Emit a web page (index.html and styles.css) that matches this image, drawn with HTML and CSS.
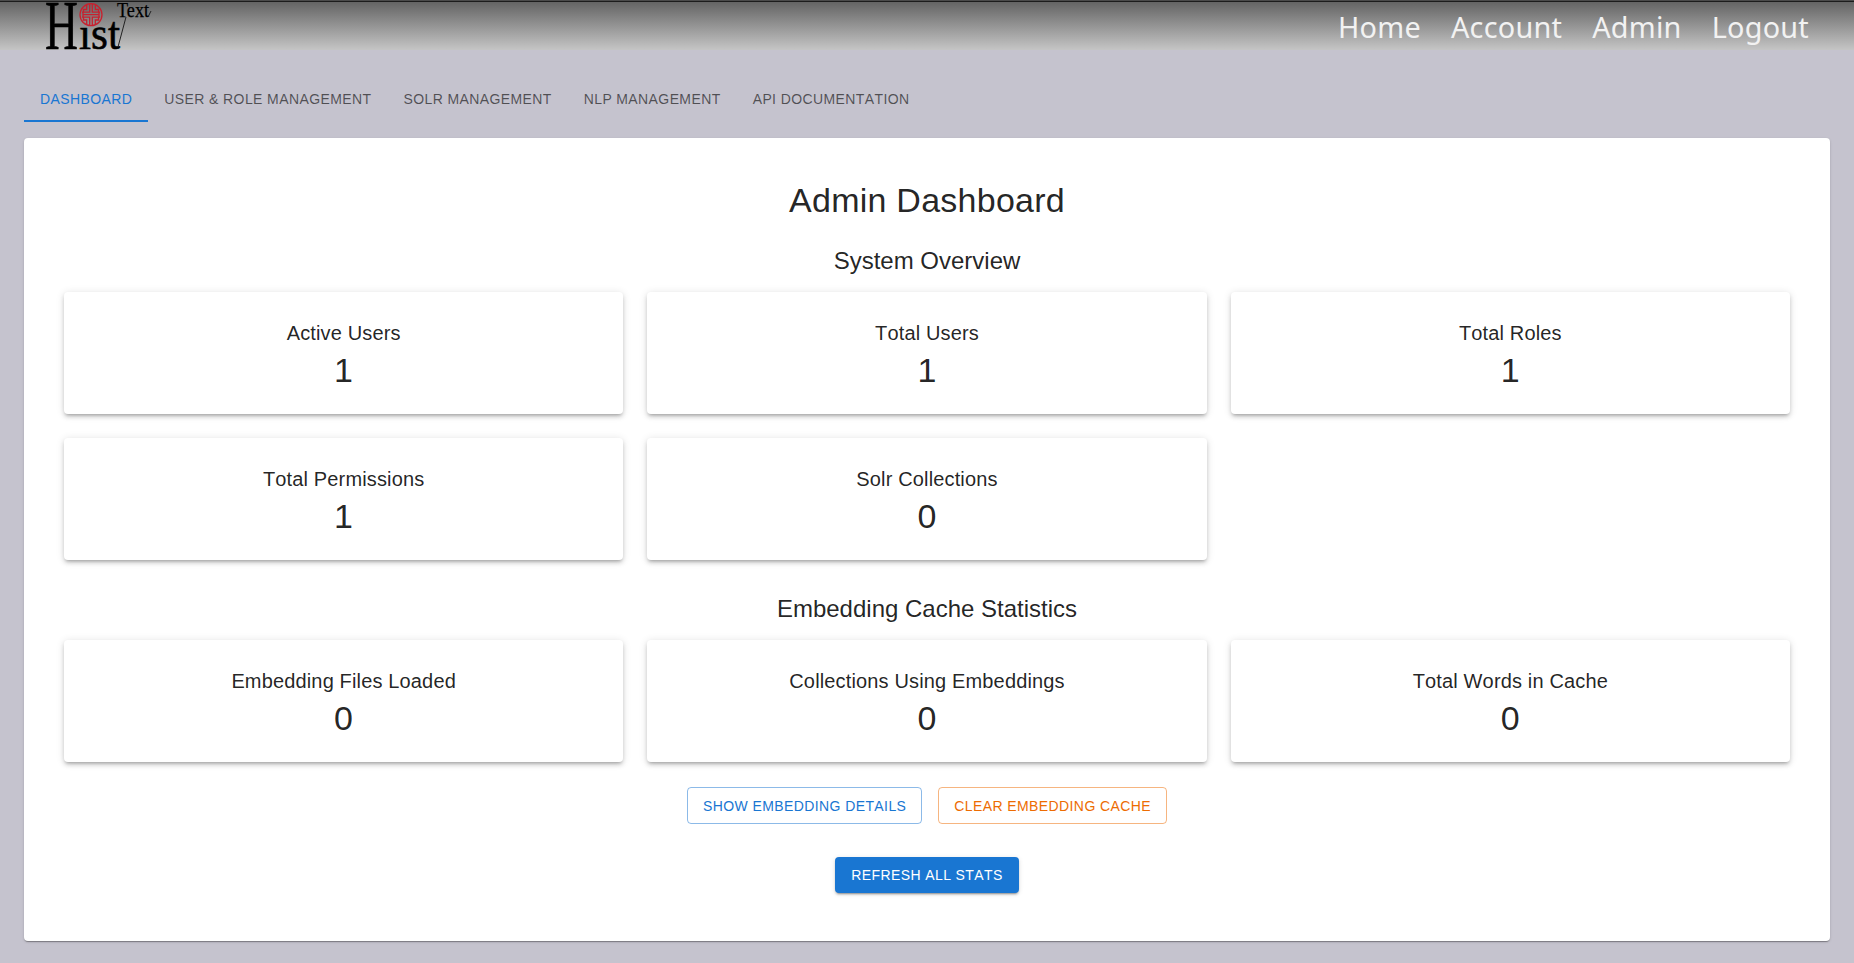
FILE: index.html
```html
<!DOCTYPE html>
<html lang="en">
<head>
<meta charset="utf-8">
<title>HistText Admin</title>
<link rel="stylesheet" href="styles.css">
</head>
<body>
<header class="topbar">
  <svg class="logo" width="112" height="50" viewBox="0 0 112 50" role="img" aria-label="HistText">
    <g class="logo-text">
      <text x="0" y="48.500" font-size="69" textLength="33" lengthAdjust="spacingAndGlyphs">H</text>
      <text x="34" y="48.500" font-size="47" textLength="41" lengthAdjust="spacingAndGlyphs">ıst</text>
      <text class="logo-small" x="72" y="17" font-size="20.500" textLength="32" lengthAdjust="spacingAndGlyphs">Text</text>
    </g>
    <path class="logo-slash" d="M81 17 L73 47 M106 11 L103.500 16"/>
    <g class="logo-seal">
      <circle cx="46" cy="14.700" r="11"/>
      <path d="M38 14.700H54M38 12.200V17.200M54 12.200V17.200M44.700 4V12.200H37M47.300 4V12.200H55M44.700 25.500V17.200H37M47.300 25.500V17.200H55M41.700 5V9.500H38.500V12M50.300 5V9.500H53.500V12M41.700 24.500V20H38.500V17.500M50.300 24.500V20H53.500V17.500"/>
    </g>
  </svg>
  <nav class="nav">
    <a>Home</a><a>Account</a><a>Admin</a><a>Logout</a>
  </nav>
</header>
<main class="page">
  <div class="tabs">
    <a class="tab tab-active">Dashboard</a>
    <a class="tab">User &amp; Role Management</a>
    <a class="tab">Solr Management</a>
    <a class="tab">NLP Management</a>
    <a class="tab">API Documentation</a>
  </div>
  <section class="panel">
    <h1 class="title">Admin Dashboard</h1>
    <h2 class="subtitle">System Overview</h2>
    <div class="grid">
      <div class="card"><h3>Active Users</h3><p>1</p></div>
      <div class="card"><h3>Total Users</h3><p>1</p></div>
      <div class="card"><h3>Total Roles</h3><p>1</p></div>
      <div class="card"><h3>Total Permissions</h3><p>1</p></div>
      <div class="card"><h3>Solr Collections</h3><p>0</p></div>
    </div>
    <h2 class="subtitle subtitle-next">Embedding Cache Statistics</h2>
    <div class="grid">
      <div class="card"><h3>Embedding Files Loaded</h3><p>0</p></div>
      <div class="card"><h3>Collections Using Embeddings</h3><p>0</p></div>
      <div class="card"><h3>Total Words in Cache</h3><p>0</p></div>
    </div>
    <div class="actions">
      <button class="btn btn-outline">Show Embedding Details</button>
      <button class="btn btn-outline btn-warn">Clear Embedding Cache</button>
    </div>
    <div class="refresh"><button class="btn btn-solid">Refresh All Stats</button></div>
  </section>
</main>
</body>
</html>
```
FILE: styles.css
```css
* { box-sizing: border-box; }
body {
  margin: 0;
  min-height: 100vh;
  background: #c5c3ce;
  color: rgba(0, 0, 0, 0.87);
  font-family: "Liberation Sans", Arial, sans-serif;
}
h1, h2, h3, p { margin: 0; font-weight: 400; }
.topbar {
  display: flex;
  justify-content: space-between;
  height: 50px;
  padding: 0 45px;
  border-top: 1px solid #4a4a4a;
  background: linear-gradient(#1c1c1c 0 1px, #646464 1px, #c5c5c5);
}
.logo { display: block; margin-top: -1px; overflow: visible; }
.logo-text { font-family: "Liberation Serif", serif; fill: #000; stroke: #000; stroke-width: 0.6; }
.logo-small { stroke-width: 0.25; }
.logo-slash { stroke: #222; stroke-width: 1; fill: none; }
.logo-seal { stroke: #c8202e; stroke-width: 1.3; fill: none; }
.nav {
  display: flex;
  gap: 30px;
  font: 28.8px/52px "Noto Sans", sans-serif;
  letter-spacing: 0.25px;
  color: #f2f2f2;
}
.page { padding: 24px 24px 22px; }
.tabs { display: flex; height: 48px; margin-bottom: 16px; }
.tab {
  display: flex;
  align-items: center;
  padding: 5px 16px 0;
  border-bottom: 2px solid transparent;
  font-size: 14px;
  line-height: 1.25;
  letter-spacing: 0.02857em;
  text-transform: uppercase;
  color: rgba(0, 0, 0, 0.6);
}
.tab:last-child { font-kerning: none; }
.tab-active { color: #1976d2; border-color: #1976d2; }
.panel {
  height: 803px;
  padding: 41px 40px 39px;
  border-radius: 4px;
  background: #fff;
  text-align: center;
  box-shadow: 0 2px 1px -1px rgba(0,0,0,.2), 0 1px 1px rgba(0,0,0,.14), 0 1px 3px rgba(0,0,0,.12);
}
.title { margin-bottom: 24px; font-size: 34px; line-height: 42px; letter-spacing: 0.00735em; }
.subtitle { margin-bottom: 15px; font-size: 24px; line-height: 32px; }
.subtitle-next { margin-top: 33px; }
.grid { display: grid; grid-template-columns: repeat(3, 1fr); gap: 24px; }
.card {
  padding: 25px 24px 23px;
  border-radius: 4px;
  background: #fff;
  box-shadow: 0 3px 3px -2px rgba(0,0,0,.2), 0 3px 4px rgba(0,0,0,.14), 0 1px 8px rgba(0,0,0,.12);
}
.card h3 { font-size: 20px; line-height: 32px; letter-spacing: 0.0075em; font-kerning: none; }
.card p { font-size: 34px; line-height: 42px; letter-spacing: 0.00735em; }
.actions { display: flex; justify-content: center; gap: 16px; margin-top: 25px; }
.refresh { margin-top: 33px; display: flex; justify-content: center; }
.btn {
  height: 37px;
  padding: 1px 16px 0;
  border: 0;
  border-radius: 4px;
  font: 14px/1.75 "Liberation Sans", Arial, sans-serif;
  font-kerning: none;
  letter-spacing: 0.02857em;
  text-transform: uppercase;
}
.btn-outline { padding: 1px 15px 0; border: 1px solid rgba(25,118,210,.5); background: transparent; color: #1976d2; }
.btn-warn { border-color: rgba(237,108,2,.5); color: #ed6c02; }
.btn-solid {
  height: 36px;
  background: #1976d2;
  color: #fff;
  box-shadow: 0 3px 1px -2px rgba(0,0,0,.2), 0 2px 2px rgba(0,0,0,.14), 0 1px 5px rgba(0,0,0,.12);
}
```
